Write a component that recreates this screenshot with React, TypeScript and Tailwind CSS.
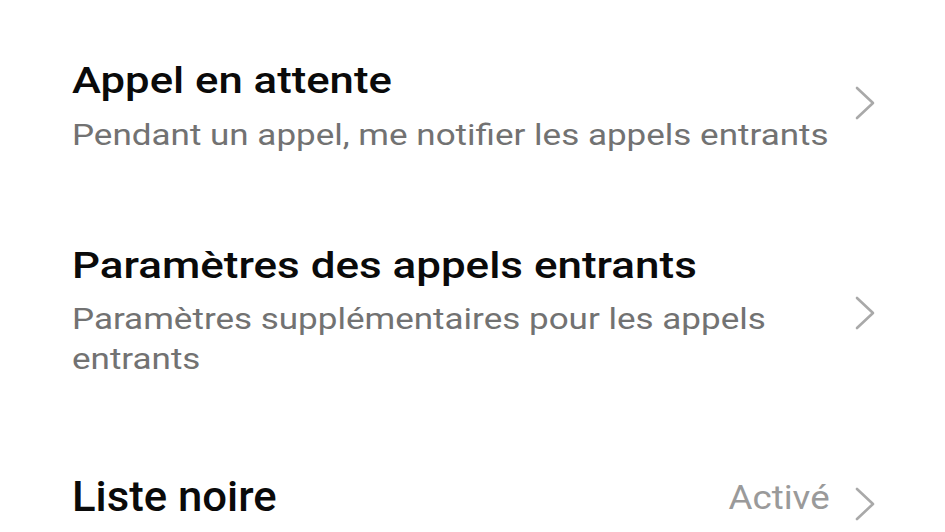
import React from "react";

const Chevron = () => (
  <svg width="22" height="34" viewBox="0 0 22 34" fill="none" className="shrink-0">
    <path d="M3 2 L19 17 L3 32" stroke="#a9a9a9" strokeWidth="2.6" strokeLinecap="round" strokeLinejoin="round" />
  </svg>
);

export default function App() {
  return (
    <div className="w-[945px] h-[532px] bg-white overflow-hidden" style={{ fontFamily: "Roboto, 'Noto Sans', sans-serif" }}>
      <div className="flex flex-col pl-[72px] pr-[69px] pt-[61px]">
        <div className="flex items-center justify-between">
          <div className="flex flex-col items-start">
            <div className="inline-block origin-left scale-x-[1.213] text-[36px] leading-[40px] font-medium text-[#0a0a0a]">Appel en attente</div>
            <div className="inline-block origin-left scale-x-[1.167] mt-[15px] text-[30px] leading-[37px] text-[#727272]">Pendant un appel, me notifier les appels entrants</div>
          </div>
          <div className="mb-[8px]">
            <Chevron />
          </div>
        </div>
        <div className="mt-[93px] flex items-center justify-between">
          <div className="flex flex-col items-start">
            <div className="inline-block origin-left scale-x-[1.221] text-[36px] leading-[40px] font-medium text-[#0a0a0a]">Paramètres des appels entrants</div>
            <div className="w-[640px] origin-left scale-x-[1.167] mt-[13px] text-[30px] leading-[40px] text-[#727272]">Paramètres supplémentaires pour les appels entrants</div>
          </div>
          <Chevron />
        </div>
        <div className="mt-[94px] flex items-center justify-between">
          <div className="inline-block origin-left scale-x-[1.04] text-[42px] leading-[46px] font-medium text-[#0a0a0a]">Liste noire</div>
          <div className="flex items-center gap-[24px]">
            <span className="inline-block origin-right scale-x-[1.08] text-[34px] leading-[40px] text-[#9a9a9a]">Activé</span>
            <div className="mt-[14px]">
              <Chevron />
            </div>
          </div>
        </div>
      </div>
    </div>
  );
}
